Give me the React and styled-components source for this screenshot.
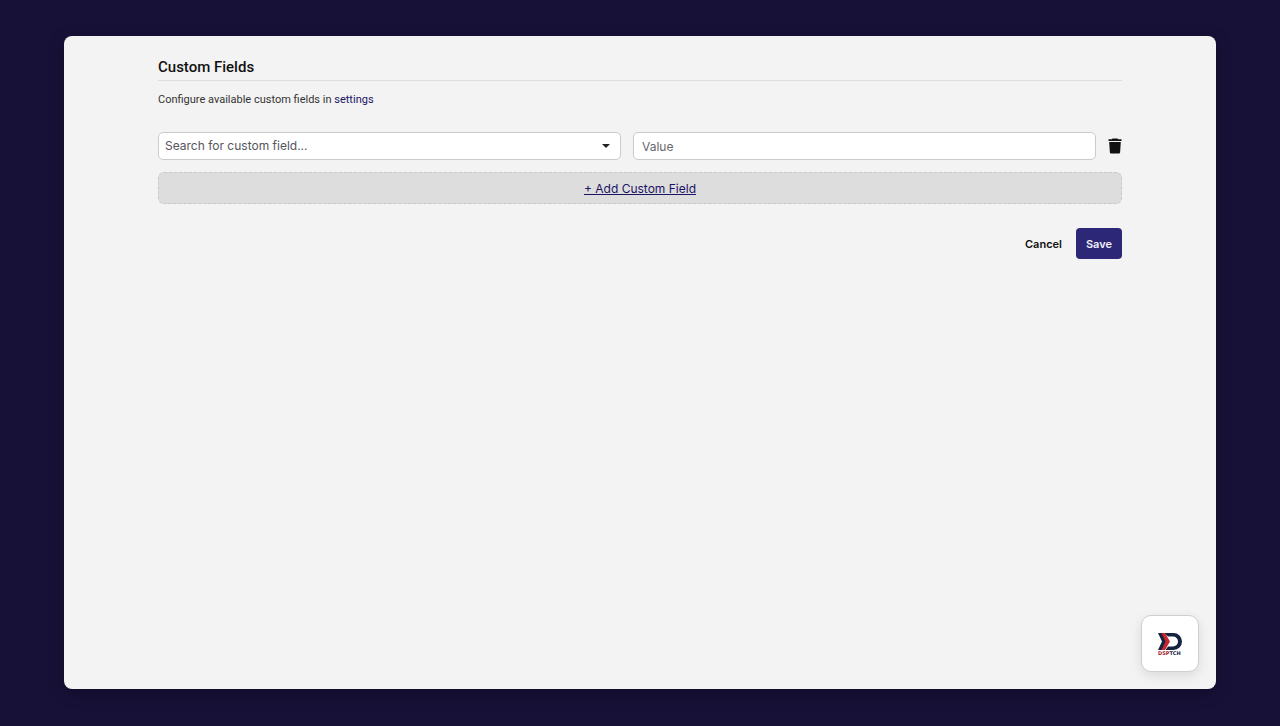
import React, { useState } from "react"
import styled, { createGlobalStyle } from "styled-components"

const GlobalStyle = createGlobalStyle`
  * {
    box-sizing: border-box;
  }
  body {
    margin: 0;
    background: #171138;
    color: #111;
    font-family: Roboto, "Liberation Sans", sans-serif;
    font-size: 12px;
  }
  button, input, select {
    font-family: Inter, "Liberation Sans", sans-serif;
  }
`

const Page = styled.div`
  display: flex;
  min-height: 100vh;
  padding: 36px 5vw 37px;
`

const Panel = styled.main`
  position: relative;
  flex: 1;
  padding: 20px 94px;
  background: #f3f3f3;
  border-radius: 8px;
  box-shadow: 0 4px 16px rgba(0, 0, 0, 0.3);
`

const Title = styled.h1`
  margin: 0 0 11px;
  padding-bottom: 2px;
  border-bottom: 1px solid #dedede;
  font-size: 15px;
  font-weight: 500;
  line-height: 22px;
`

const Hint = styled.p`
  margin: 0 0 24px;
  color: #333;
  font-size: 11px;
  line-height: 16px;
`

const SettingsLink = styled.a`
  color: #1a1464;
  text-decoration: none;
`

const FieldRow = styled.div`
  display: grid;
  grid-template-columns: minmax(0, 1fr) minmax(0, 1fr) auto;
  align-items: center;
  gap: 12px;
  margin-bottom: 12px;
`

const SelectWrap = styled.div`
  position: relative;

  svg {
    position: absolute;
    top: 12px;
    right: 11px;
    pointer-events: none;
  }
`

const FieldSelect = styled.select`
  display: block;
  width: 100%;
  height: 28px;
  padding: 0 24px 2px 6px;
  appearance: none;
  background: #fff;
  border: 1px solid #cbcbcd;
  border-radius: 5px;
  color: #55555c;
  font-size: 12px;
`

const ValueInput = styled.input`
  width: 100%;
  height: 28px;
  padding: 0 8px;
  background: #fff;
  border: 1px solid #cbcbcd;
  border-radius: 5px;
  color: #333;
  font-size: 12px;

  &::placeholder {
    color: #66666c;
    opacity: 1;
  }
`

const IconButton = styled.button`
  display: flex;
  padding: 0;
  background: none;
  border: 0;
  color: #111;
  cursor: pointer;
`

const AddButton = styled.button`
  display: block;
  width: 100%;
  height: 32px;
  padding: 0;
  background: #dedddd;
  border: 1px dashed #c9c9c9;
  border-radius: 6px;
  color: #1a1464;
  font-size: 12px;
  text-decoration: underline;
  cursor: pointer;
`

const Actions = styled.div`
  display: flex;
  justify-content: flex-end;
  gap: 4px;
  margin-top: 24px;
`

const Button = styled.button`
  height: 31px;
  padding: 0 10px;
  background: ${(props) => (props.$primary ? "#2c2877" : "transparent")};
  border: 0;
  border-radius: 4px;
  color: ${(props) => (props.$primary ? "#f0effa" : "#111")};
  font-size: 11px;
  font-weight: 600;
  cursor: pointer;
`

const Launcher = styled.button`
  position: absolute;
  right: 17px;
  bottom: 17px;
  display: flex;
  align-items: center;
  justify-content: center;
  width: 58px;
  height: 57px;
  padding: 0;
  background: #fff;
  border: 1px solid #cfcfcf;
  border-radius: 10px;
  box-shadow: 0 4px 12px rgba(0, 0, 0, 0.1);
  cursor: pointer;
`

const Caret = () => (
  <svg width="8" height="4" viewBox="0 0 8 4" aria-hidden="true">
    <path d="M0 0h8L4 4z" fill="#222" />
  </svg>
)

const TrashIcon = () => (
  <svg width="14" height="16" viewBox="0 0 14 16" aria-hidden="true">
    <path
      d="M4.5 0.5h5l0.6 0.8h3.4v1.7H0.5V1.3h3.4zM1.2 4h11.6l-0.7 10.4a1.2 1.2 0 0 1-1.2 1.1H3.1a1.2 1.2 0 0 1-1.2-1.1z"
      fill="currentColor"
    />
  </svg>
)

const Logo = () => (
  <svg width="26" height="24" viewBox="0 0 26 24" aria-hidden="true">
    <path
      d="M7 1h9.5a8.5 8.5 0 0 1 0 17H8.5l2.5-3.5h5a5 5 0 0 0 0-10H11z"
      fill="#14233f"
    />
    <path d="M1 1h4l5 8.5L5 18H1l4-8.5z" fill="#14233f" />
    <path d="M4.5 1H8l5 8.5L8 18H4.5l4-8.5z" fill="#c9252f" />
    <text
      x="1"
      y="23"
      fontFamily="DejaVu Sans, sans-serif"
      fontSize="5"
      fontWeight="700"
      fill="#14233f"
    >
      <tspan fill="#a3202c">DSP</tspan>TCH
    </text>
  </svg>
)

function CustomFieldRow({ onRemove }) {
  return (
    <FieldRow>
      <SelectWrap>
        <FieldSelect aria-label="Custom field" defaultValue="">
          <option value="">Search for custom field...</option>
        </FieldSelect>
        <Caret />
      </SelectWrap>
      <ValueInput aria-label="Value" placeholder="Value" />
      <IconButton type="button" aria-label="Remove" onClick={onRemove}>
        <TrashIcon />
      </IconButton>
    </FieldRow>
  )
}

function App() {
  const [rows, setRows] = useState([1])

  const addRow = () => setRows([...rows, Date.now()])
  const removeRow = (id) => setRows(rows.filter((row) => row !== id))

  return (
    <Page>
      <GlobalStyle />
      <Panel>
        <Title>Custom Fields</Title>
        <Hint>
          Configure available custom fields in{" "}
          <SettingsLink href="#settings">settings</SettingsLink>
        </Hint>
        <form onSubmit={(e) => e.preventDefault()}>
          {rows.map((id) => (
            <CustomFieldRow key={id} onRemove={() => removeRow(id)} />
          ))}
          <AddButton type="button" onClick={addRow}>
            + Add Custom Field
          </AddButton>
          <Actions>
            <Button type="button">Cancel</Button>
            <Button type="submit" $primary>
              Save
            </Button>
          </Actions>
        </form>
        <Launcher type="button" aria-label="Open DSPTCH">
          <Logo />
        </Launcher>
      </Panel>
    </Page>
  )
}

export default App
